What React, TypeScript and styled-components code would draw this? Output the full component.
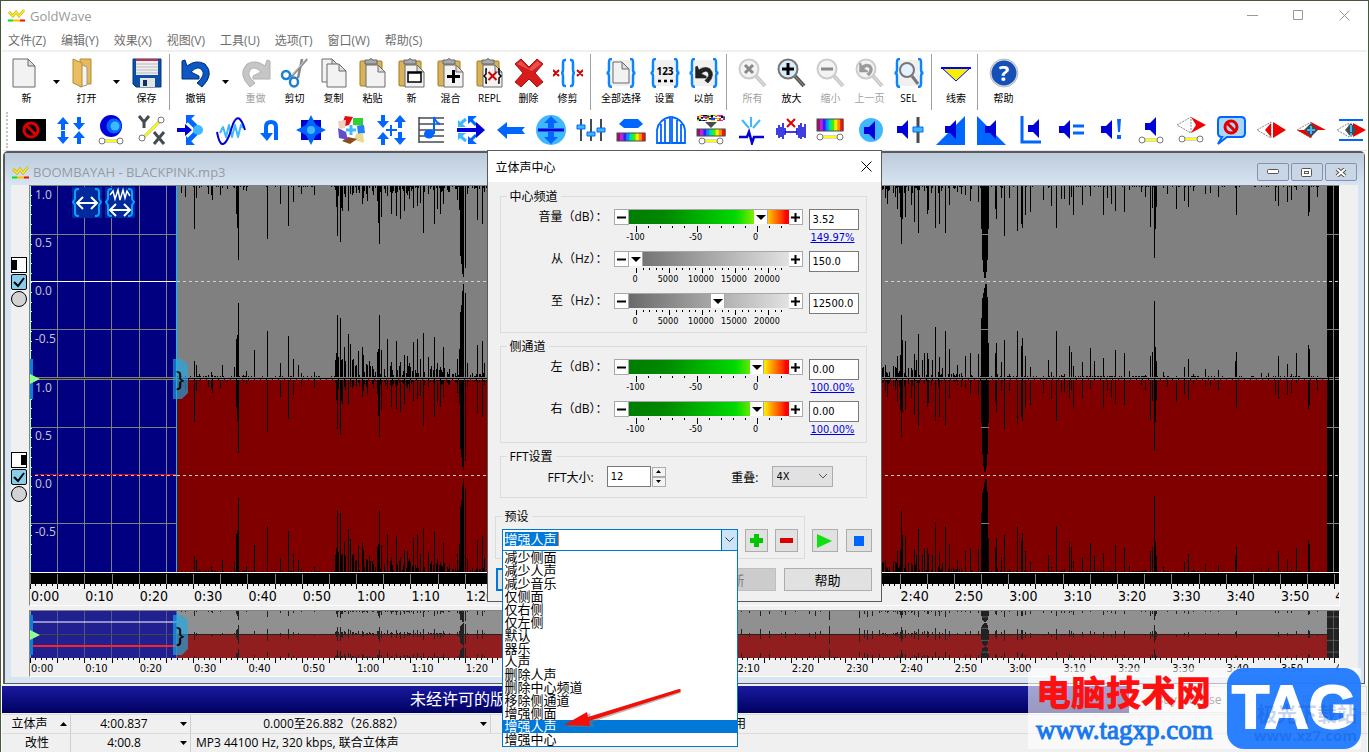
import React, { ReactNode } from 'react';
import styled, { createGlobalStyle, css } from 'styled-components';

const UI = '"Open Sans", "Noto Sans CJK SC", sans-serif';
const TAHOMA = '"DejaVu Sans Condensed", "Noto Sans", "Noto Sans CJK SC", sans-serif';

const GlobalStyle = createGlobalStyle`
  * { box-sizing: border-box; }
  body { margin: 0; background: #41563a; font-family: ${UI}; font-size: 12px; color: #000; overflow: hidden; }
  button, input, select { font: inherit; color: inherit; margin: 0; padding: 0; }
  button { cursor: default; }
  ul { list-style: none; margin: 0; padding: 0; }
  svg { display: block; flex: none; }
`;

const svgUrl = (body: string, w: number, h: number) =>
  `url("data:image/svg+xml,${encodeURIComponent(`<svg xmlns='http://www.w3.org/2000/svg' width='${w}' height='${h}'>${body}</svg>`)}")`;

/* ---------- application shell ---------- */

const AppWindow = styled.div`
  position: relative;
  display: flex;
  flex-direction: column;
  min-height: 100vh;
  padding: 1px 1px 0;
  background: #fff;
  border: 1px solid #46583c;
`;
const TitleBar = styled.header`
  display: flex;
  align-items: center;
  height: 29px;
  padding: 0 0 2px 6px;
  gap: 5px;
  color: #999;
  font-size: 13px;
`;
const CaptionButtons = styled.div`
  margin-left: auto;
  display: flex;
`;
const CaptionButton = styled.button`
  width: 46px;
  height: 28px;
  border: 0;
  background: none;
  display: grid;
  place-items: center;
  color: #999;
`;
const MenuBar = styled.nav`
  display: flex;
  align-items: center;
  gap: 15px;
  height: 21px;
  padding-left: 6px;
  border-bottom: 2px solid #f0f0f0;
`;
const MenuItem = styled.a`
  color: #6d6d6d;
  font-size: 12px;
  line-height: 18px;
  text-decoration: none;
  white-space: nowrap;
`;
const Toolbar = styled.div`
  display: flex;
  height: 60px;
  padding: 6px 0 0 5px;
`;
const ToolButton = styled.button<{ $w?: number; $off?: boolean }>`
  width: ${(p) => p.$w ?? 39}px;
  height: 48px;
  flex: none;
  border: 0;
  background: none;
  display: flex;
  flex-direction: column;
  align-items: center;
  gap: 2px;
  font-size: 10px;
  line-height: 16px;
  white-space: nowrap;
  color: ${(p) => (p.$off ? '#a0a0a0' : '#000')};
`;
const DropArrow = styled.button`
  width: 21px;
  height: 48px;
  flex: none;
  border: 0;
  background: none;
  display: grid;
  place-items: center;
`;
const Separator = styled.i`
  flex: none;
  width: 1px;
  height: 56px;
  margin: -4px 6px 0 3px;
  background: #a0a0a0;
`;
const EffectBar = styled.div`
  display: flex;
  align-items: center;
  height: 39px;
  padding: 0 0 3px 4px;
  border-bottom: 1px solid #e3e3e3;
  overflow: hidden;
`;
const Grip = styled.i`
  flex: none;
  width: 5px;
  height: 36px;
  border-left: 2px dotted #c4c4c4;
`;
const EffectButton = styled.button`
  width: 40px;
  height: 32px;
  flex: none;
  border: 0;
  background: none;
  display: grid;
  place-items: center;
`;

/* ---------- document window ---------- */

const Doc = styled.section`
  flex: 1;
  display: flex;
  flex-direction: column;
  margin: 0 2px 0 1px;
  border: solid #5a5a5e;
  border-width: 2px 1px 1px 2px;
  border-radius: 5px 5px 0 0;
  background: #d7e4f2;
  padding: 0 6px 6px 6px;
`;
const DocTitle = styled.div`
  display: flex;
  align-items: center;
  gap: 4px;
  height: 32px;
  margin: 0 -6px;
  padding: 6px 7px 0 7px;
  background: linear-gradient(#bccbda, #d7e4f2);
  color: #959ba3;
  font-size: 13px;
`;
const DocButtons = styled.div`
  margin-left: auto;
  display: flex;
  gap: 2px;
`;
const DocButton = styled.button`
  width: 32px;
  height: 18px;
  border: 1px solid #8790b0;
  border-radius: 2px;
  background: #c9d6e5;
  display: grid;
  place-items: center;
`;
const DocBody = styled.div`
  flex: 1;
  display: flex;
  background: #f0f0f0;
`;
const ChannelRail = styled.div`
  width: 18px;
  padding-top: 72px;
`;
const ChannelTools = styled.div`
  height: 195px;
  display: flex;
  flex-direction: column;
  gap: 1px;
`;
const ChannelSide = styled.button<{ $right?: boolean }>`
  width: 16px;
  height: 16px;
  border: 1px solid #000;
  background: ${(p) =>
    svgUrl(`<rect x='${p.$right ? 9 : 0}' y='2' width='5' height='10'/>`, 14, 14)} #fff;
`;
const ChannelCheck = styled.input`
  appearance: none;
  width: 16px;
  height: 16px;
  border: 1px solid #000;
  border-radius: 2px;
  background: ${svgUrl("<path d='M2 7l4 4 6-8' fill='none' stroke='#000' stroke-width='2'/>", 14, 14)} #87ceeb;
`;
const ChannelRadio = styled.input`
  appearance: none;
  width: 16px;
  height: 16px;
  border: 1px solid #000;
  border-radius: 50%;
  background: #d3d3d3;
`;
const DocMain = styled.div`
  flex: 1;
  min-width: 0;
  display: flex;
  flex-direction: column;
  gap: 4px;
  margin-right: 18px;
`;
const Sunken = styled.div`
  border: 1px solid #828282;
  border-right-color: #fff;
  border-bottom-color: #fff;
  overflow: hidden;
`;
const WaveBox = styled.div<{ $h: number }>`
  position: relative;
  height: ${(p) => p.$h}px;
  background: #808080;
  & > svg:first-child { width: 100%; height: 100%; }
`;
const AxisLabels = styled.div<{ $top: number }>`
  position: absolute;
  left: 5px;
  top: ${(p) => p.$top}px;
  color: #c8c8c8;
  font: 12px/16px ${UI};
  display: grid;
  grid-auto-rows: 48px;
`;
const SelectionTools = styled.div`
  position: absolute;
  left: 42px;
  top: 1px;
  display: flex;
  gap: 3px;
`;
const SelectionTool = styled.button`
  border: 0;
  padding: 0;
  background: #002a9c;
  width: 30px;
  height: 31px;
`;
const EndHandle = styled.span<{ $top: number }>`
  position: absolute;
  left: calc(11.15% - 3px);
  top: ${(p) => p.$top}px;
  width: 15px;
  height: 40px;
  clip-path: polygon(0 0, 9px 0, 100% 6px, 100% 34px, 9px 100%, 0 100%);
  background: rgba(30, 170, 230, 0.65);
  font: 22px/38px "Noto Sans", sans-serif;
  padding-left: 3px;
`;
const StartHandle = styled.span<{ $top: number }>`
  position: absolute;
  left: 0;
  top: ${(p) => p.$top}px;
  width: 3px;
  height: 40px;
  background: #0a80d8;
`;
const PlayMark = styled.span<{ $top: number }>`
  position: absolute;
  left: 0;
  top: ${(p) => p.$top}px;
  border: solid transparent;
  border-width: 5px 0 5px 10px;
  border-left-color: #90ff90;
`;
const RulerTicks = styled.svg`
  width: 100%;
`;
const RulerLabels = styled.div<{ $big?: boolean }>`
  display: flex;
  height: ${(p) => (p.$big ? 16 : 13)}px;
  font: ${(p) => (p.$big ? '14px/15px' : '11px/12px')} ${TAHOMA};
  & > span { flex: 0 0 4.152%; padding-left: 1px; white-space: nowrap; }
`;

/* ---------- footer ---------- */

const Footer = styled.footer`
  background: #f0f0f0;
  padding-top: 2px;
`;
const Banner = styled.div`
  display: flex;
  height: 27px;
  margin-bottom: 1px;
`;
const BannerText = styled.strong`
  flex: 1;
  padding-left: 408px;
  background: linear-gradient(#1a1aa0, #000060);
  color: #fff;
  font-weight: 400;
  font-size: 16px;
  line-height: 26px;
`;
const BannerButton = styled.button`
  width: 119px;
  border: 1px solid #ddd;
  background: #f5f5f5;
  font-size: 12px;
  color: #333;
`;
const StatusGrid = styled.div`
  display: grid;
  grid-template-columns: 69px 120px 300px 256px 1fr;
  grid-auto-rows: 19px;
`;
const StatusCell = styled.div<{ $align?: string; $span?: number }>`
  display: flex;
  align-items: center;
  justify-content: ${(p) => p.$align ?? 'center'};
  padding: 0 3px 0 5px;
  gap: 8px;
  border-top: 1px solid #dcdcdc;
  border-right: 1px solid #d0d0d0;
  line-height: 18px;
  white-space: nowrap;
  ${(p) => p.$span && css`grid-column: span ${p.$span}; border-right: 0;`}
  & > span { flex: 1; text-align: center; }
`;
const StatusNote = styled.p`
  flex: 1;
  margin: 0;
  padding-left: 190px;
`;

/* ---------- dialog ---------- */

const Dialog = styled.section`
  position: absolute;
  left: 50%;
  top: 149px;
  width: 395px;
  margin-left: -198px;
  height: 452px;
  border: 1px solid #5a5a5a;
  background: #f0f0f0;
  font-size: 12px;
`;
const DialogTitle = styled.header`
  display: flex;
  align-items: center;
  justify-content: space-between;
  height: 31px;
  padding: 0 2px 0 8px;
  background: #fff;
`;
const CloseButton = styled.button`
  width: 24px;
  height: 24px;
  border: 0;
  background: none;
  display: grid;
  place-items: center;
`;
const Group = styled.fieldset<{ $h: number; $gap: number }>`
  position: relative;
  height: ${(p) => p.$h}px;
  margin: ${(p) => p.$gap}px 14px 0 12px;
  padding: 0;
  border: 1px solid #dcdcdc;
`;
const Legend = styled.legend`
  position: absolute;
  top: -9px;
  left: 6px;
  padding: 0 3px;
  line-height: 18px;
  background: #f0f0f0;
`;
const SliderRow = styled.div`
  display: grid;
  grid-template-columns: 107px 189px 50px;
  column-gap: 6px;
  height: 42px;
  align-items: start;
`;
const SliderRows = styled.div`
  padding-top: 12px;
`;
const RowLabel = styled.label`
  text-align: right;
  line-height: 16px;
  white-space: nowrap;
`;
const SliderTrack = styled.div`
  display: flex;
  height: 16px;
  border: solid #a8a8a8;
  border-width: 1px 0 0 1px;
`;
const StepButton = styled.button`
  width: 14px;
  height: 15px;
  flex: none;
  border: 0;
  border-right: 1px solid #aaa;
  border-bottom: 1px solid #aaa;
  background: #fff;
  display: grid;
  place-items: center;
`;
const thumb = svgUrl("<path d='M2 5h10l-5 5z'/>", 14, 15);
const Range = styled.input<{ $db?: boolean }>`
  appearance: none;
  flex: 1;
  min-width: 0;
  height: 14px;
  background: ${(p) =>
    p.$db
      ? 'linear-gradient(90deg,#007d00 0%,#008800 22%,#00d800 66%,#20e000 70%,#98f000 80%,#f4f400 84%,#ffd800 86%,#ff9000 90%,#ff3000 96%,#f00 98%)'
      : 'linear-gradient(90deg,#6a6a6a,#e2e2e2)'};
  &::-webkit-slider-thumb {
    appearance: none;
    width: 14px;
    height: 14px;
    background: ${thumb} #fff;
    border-right: 1px solid #aaa;
  }
`;
const ScaleLabels = styled.div<{ $cell: number; $start: number }>`
  display: flex;
  margin-left: ${(p) => p.$start}px;
  font: 9px/10px ${TAHOMA};
  & > span { flex: 0 0 ${(p) => p.$cell}px; text-align: center; }
`;
const ValueColumn = styled.div`
  display: flex;
  flex-direction: column;
  align-items: flex-end;
`;
const boxed = css`
  height: 21px;
  border: 1px solid #7a7a7a;
  background: #fff;
  padding-left: 3px;
  font: 11px/16px ${TAHOMA};
`;
const ValueInput = styled.input`
  ${boxed}
  width: 50px;
`;
const PercentLink = styled.a`
  padding-right: 4px;
  color: #0000e6;
  font: 11px/16px ${TAHOMA};
`;
const FftRow = styled.div`
  display: flex;
  align-items: center;
  padding: 9px 33px 0 47px;
`;
const FftInput = styled.input`
  ${boxed}
  width: 44px;
  margin-left: 13px;
`;
const Spinner = styled.div`
  display: grid;
  margin: 0 auto 0 1px;
`;
const SpinButton = styled.button`
  width: 14px;
  height: 10px;
  border: 1px solid #acacac;
  background: #f4f4f4;
  display: grid;
  place-items: center;
`;
const OverlapSelect = styled.select`
  appearance: none;
  width: 61px;
  height: 21px;
  margin-left: 13px;
  padding-left: 4px;
  border: 1px solid #adadad;
  border-radius: 0;
  font: 11px/16px ${TAHOMA};
  background: ${svgUrl("<path d='M1 1l4 4 4-4' fill='none' stroke='#555'/>", 11, 7)} no-repeat right 3px center #e1e1e1;
`;
const PresetRow = styled.div`
  display: flex;
  align-items: flex-start;
`;
const PresetGroup = styled.fieldset`
  position: relative;
  width: 310px;
  height: 43px;
  margin: 18px 0 0 7px;
  padding: 12px 0 0 6px;
  border: 1px solid #dcdcdc;
  display: flex;
  gap: 7px;
`;
const Combo = styled.div`
  position: relative;
  display: flex;
  width: 236px;
  height: 22px;
  border: 1px solid #0078d7;
  background: #fff;
`;
const ComboInput = styled.input`
  width: 54px;
  height: 14px;
  margin: 2px auto 0 2px;
  border: 0;
  border-right: 1px solid #e08030;
  background: #0078d7;
  color: #fff;
  font-size: 13px;
  line-height: 14px;
`;
const ComboButton = styled.button`
  width: 16px;
  border: 0;
  border-left: 1px solid #0064b0;
  background: #cce4f7;
  display: grid;
  place-items: center;
`;
const Options = styled.ul`
  position: absolute;
  left: -1px;
  top: 20px;
  width: 236px;
  border: 1px solid #0078d7;
  background: #fff;
  z-index: 2;
`;
const Option = styled.li<{ $on?: boolean }>`
  height: 13px;
  padding-left: 2px;
  font-size: 13px;
  line-height: 12px;
  color: ${(p) => (p.$on ? '#fff' : '#000')};
  background: ${(p) => (p.$on ? '#0078d7' : 'none')};
`;
const Square = styled.button<{ $w: number }>`
  width: ${(p) => p.$w}px;
  height: 23px;
  flex: none;
  border: 1px solid #adadad;
  background: #e1e1e1;
  display: grid;
  place-items: center;
`;
const PlayButtons = styled.div`
  display: flex;
  gap: 8px;
  padding: 31px 0 0 7px;
`;
const DialogButtons = styled.div`
  display: flex;
  gap: 8px;
  padding: 9px 0 0 8px;
`;
const PushButton = styled.button<{ $primary?: boolean }>`
  width: 88px;
  height: 23px;
  border: ${(p) => (p.$primary ? '2px solid #0078d7' : '1px solid #adadad')};
  background: #e1e1e1;
  font-size: 13px;
  line-height: 18px;
  &:disabled { background: #ccc; color: #838383; border-color: #bfbfbf; }
`;
const PointerArrow = styled.svg`
  position: absolute;
  left: 75px;
  top: 535px;
  z-index: 3;
`;

/* ---------- watermark ---------- */

const Watermark = styled.aside`
  position: absolute;
  right: 7px;
  bottom: 3px;
  width: 333px;
  height: 81px;
  display: flex;
  justify-content: space-between;
  background: rgba(255, 255, 255, 0.6);
`;
const WatermarkText = styled.div`
  padding: 4px 0 0 8px;
  color: #ff1010;
  font: 900 35px/37px "Noto Sans CJK SC", sans-serif;
  white-space: nowrap;
`;
const WatermarkUrl = styled.div`
  margin-top: 5px;
  color: #1878f0;
  font: 400 27px/32px "Liberation Serif", serif;
  -webkit-text-stroke: 1px #1878f0;
`;
const TagBadge = styled.div`
  position: relative;
  width: 134px;
  height: 81px;
  border-radius: 17px;
  background: rgba(24, 117, 255, 0.92);
  color: #fff;
  font: 700 61px/78px "Liberation Sans", sans-serif;
  -webkit-text-stroke: 2px #fff;
  text-align: center;
`;
const SiteMark = styled.div`
  position: absolute;
  right: 4px;
  bottom: 4px;
  color: rgba(0, 60, 170, 0.22);
  font: 700 20px/20px ${UI};
  -webkit-text-stroke: 0;
  text-align: right;
  & > small { display: block; font-size: 15px; }
`;

/* ---------- icons ---------- */

const B = '#0066ff';
const D = '#0000d8';
const L = '#40b8ff';
const G = '#444c52';

const Icon = ({ children, size = 30 }: { children: ReactNode; size?: number }) => (
  <svg width={size} height={size} viewBox="0 0 30 30" fill="none" aria-hidden="true">{children}</svg>
);
const Logo = () => (
  <svg width="17" height="13" viewBox="0 0 17 13" fill="none">
    <path d="M1 3l4 4 3-4 3 4 5-6" stroke="#b89a00" strokeWidth="2.500" />
    <path d="M1 3l4 4 3-4 3 4 5-6" stroke="#ffee20" strokeWidth="1.500" />
    <path d="M0 11.500h5" stroke="#00e020" strokeWidth="2" />
    <path d="M5 11.500h7" stroke="#ffc000" strokeWidth="2" />
    <path d="M12 11.500h5" stroke="#f01000" strokeWidth="2" />
  </svg>
);
const Down = () => <svg width="7" height="4" viewBox="0 0 7 4"><path d="M0 0h7L3.500 4z" /></svg>;
const Up = () => <svg width="7" height="4" viewBox="0 0 7 4"><path d="M0 4h7L3.500 0z" /></svg>;

const Nodes = ({ y = 26, x1 = 6, x2 = 24 }: { y?: number; x1?: number; x2?: number }) => (
  <g>
    <path d={`M${x1} ${y}H${x2}`} stroke="#aaa" strokeWidth="3" />
    <path d={`M${x1} ${y}H${x2}`} stroke="#ffff00" strokeWidth="2" />
    <circle cx={x1} cy={y} r="3" fill="#fff" stroke="#777" />
    <circle cx={x2} cy={y} r="3" fill="#fff" stroke="#777" />
  </g>
);
const No = ({ x = 15, y = 15, r = 7 }: { x?: number; y?: number; r?: number }) => (
  <g stroke="#e00000" strokeWidth="3"><circle cx={x} cy={y} r={r} /><path d={`M${x - 5} ${y - 5}l10 10`} /></g>
);
const Speaker = ({ x = 0, y = 0 }: { x?: number; y?: number }) => (
  <path transform={`translate(${x} ${y})`} d="M0 6h5l6-6v19l-6-6H0z" fill={D} />
);
const Rainbow = ({ y, h = 8, w = 28 }: { y: number; h?: number; w?: number }) => (
  <g>
    {['#a01060', '#c020e0', '#3020ff', '#0090ff', '#00e0a0', '#40f000', '#f0f000', '#ff9000', '#ff1000'].map((c, i) => (
      <rect key={c} x={1 + (i * w) / 9} y={y} width={w / 9 + 0.5} height={h} fill={c} />
    ))}
    <rect x="1" y={y} width={w} height={h} stroke={G} />
  </g>
);
const Braces = () => (
  <>
    <rect x="5" y="2" width="20" height="26" fill="#f0f0f0" />
    <path
      d="M6 1H5Q3 1 3 4v8q0 3-2.500 3q2.500 0 2.500 3v8q0 3 3 3M24 1h1q2 0 2 3v8q0 3 2.500 3q-2.500 0-2.500 3v8q0 3-3 3"
      stroke="#0a84ff" strokeWidth="2.500"
    />
  </>
);
const Page = ({ x = 1, y = 1, w = 22, h = 28 }: { x?: number; y?: number; w?: number; h?: number }) => (
  <g>
    <path d={`M${x} ${y}h${w - 7}l7 7v${h - 7}h-${w}z`} fill="#f2f2f2" stroke="#6a6a6a" />
    <path d={`M${x + w - 7} ${y}v7h7z`} fill="#ddd" stroke="#6a6a6a" />
  </g>
);
const Clip = ({ children }: { children?: ReactNode }) => (
  <Icon>
    <rect x="2" y="3" width="22" height="25" rx="1" fill="#d9b35c" stroke="#a77918" />
    <path d="M7 2h4q2-3 4 0h4v4H7z" fill="#aaa" stroke="#666" />
    <Page x={8} y={7} w={19} h={22} />
    {children}
  </Icon>
);
const Lens = ({ off, children }: { off?: boolean; children?: ReactNode }) => (
  <Icon>
    <path d="M18 18l9 10" stroke={off ? '#c8c8c8' : '#555'} strokeWidth="4" />
    <path d="M18 18l9 10" stroke={off ? '#e6e6e6' : '#999'} strokeWidth="1" />
    <circle cx="11" cy="11" r="9.500" fill={off ? '#f3f3f3' : '#d8ecfc'} stroke={off ? '#ccc' : '#777'} strokeWidth="2" />
    {children}
  </Icon>
);
const Undo = ({ fill = '#0a58c4', stroke = '#052a74' }: { fill?: string; stroke?: string }) => (
  <path d="M1 3l3-1 2 6q9-7 18-2q10 10-3 23l-5-4q9-8 5-13q-4-5-11 2l8 4v3H1z" fill={fill} stroke={stroke} />
);
const Diamond = ({ y = 0, fill = '#f00000' }: { y?: number; fill?: string }) => (
  <g transform={`translate(0 ${y})`}>
    <path d="M1 15l14-8v16z" fill="#fff" stroke="#888" strokeDasharray="2 1" />
    <path d="M15 7l15 8-15 8 5-8z" fill={fill} />
  </g>
);
const x4 = (cx: number, cy: number, r: number) =>
  `M${cx - r} ${cy - r}L${cx + r} ${cy + r}M${cx + r} ${cy - r}L${cx - r} ${cy + r}`;

type Tool = { label: string; icon: ReactNode; w?: number; off?: boolean; drop?: boolean };
const toolGroups: Tool[][] = [
  [
    { label: '新', drop: true, icon: <Icon><Page /></Icon> },
    {
      label: '打开', drop: true,
      icon: <Icon>
        <path d="M8 1h11v25H8z" fill="#e6b95c" stroke="#b98a2c" />
        <path d="M8 6l7 3v18l-7 2z" fill="#f4f4f4" stroke="#999" />
        <path d="M1 1l9 4v24L1 25z" fill="#e9be62" stroke="#b98a2c" />
      </Icon>,
    },
    {
      label: '保存',
      icon: <Icon>
        <path d="M1 1h28v28H4l-3-3z" fill="#0c4ea8" stroke="#083878" />
        <path d="M4 1h22v16H4z" fill="#eee" /><path d="M4 1h22v2H4z" fill="#c03050" />
        <path d="M4 6h22M4 9h22M4 12h22M4 15h22" stroke="#bbb" />
        <path d="M8 20h15v9H8z" fill="#e4e4e4" /><path d="M11 22h4v6h-4z" fill="#103060" />
      </Icon>,
    },
  ],
  [
    { label: '撤销', drop: true, icon: <Icon><Undo /></Icon> },
    { label: '重做', off: true, icon: <Icon><g transform="translate(30 0) scale(-1 1)"><Undo fill="#c6c6c6" stroke="#b0b0b0" /></g></Icon> },
    {
      label: '剪切',
      icon: <Icon>
        <path d="M27 1L11 19M22 1l-4 19" stroke="#888" strokeWidth="2.500" /><path d="M26 1L12 17" stroke="#ddd" />
        <ellipse cx="6" cy="17" rx="4" ry="4" stroke="#1c7fd0" strokeWidth="2.500" />
        <ellipse cx="14" cy="24" rx="4" ry="4.500" stroke="#1c7fd0" strokeWidth="2.500" />
      </Icon>,
    },
    { label: '复制', icon: <Icon><Page x={3} y={1} w={17} h={23} /><Page x={8} y={6} w={19} h={23} /></Icon> },
    { label: '粘贴', icon: <Clip /> },
    { label: '新', icon: <Clip><path d="M11 14h13v10H11zM11 15h13" stroke="#000" strokeWidth="1.500" fill="#fff" /></Clip> },
    { label: '混合', icon: <Clip><path d="M17.500 12v13M11 18.500h13" stroke="#000" strokeWidth="3" /></Clip> },
    {
      label: 'REPL',
      icon: <Clip>
        <path d={x4(17.5, 18, 4)} stroke="#d00000" strokeWidth="2" />
        <path d="M12 11h-1v5l-2 2 2 2v5h1M23 11h1v5l2 2-2 2v5h-1" stroke="#000" strokeWidth="1.500" />
      </Clip>,
    },
    {
      label: '删除',
      icon: <Icon><path d="M1 6l6-5 8 8 8-8 6 5-8 9 8 9-6 5-8-8-8 8-6-5 8-9z" fill="#d81c1c" stroke="#a81010" /><path d="M3 6l4-3 8 8 8-8 4 3-9 7z" fill="#e85050" /></Icon>,
    },
    {
      label: '修剪',
      icon: <Icon>
        <path d="M13 2h-1q-2 0-2 3v7q0 3-2 3q2 0 2 3v7q0 3 2 3h1M17 2h1q2 0 2 3v7q0 3 2 3q-2 0-2 3v7q0 3-2 3h-1" stroke="#0a84ff" strokeWidth="2.500" />
        <path d={x4(3, 15, 3) + x4(27, 15, 3)} stroke="#d00000" strokeWidth="2" />
      </Icon>,
    },
  ],
  [
    { label: '全部选择', w: 48, icon: <Icon><Braces /><Page x={7} y={4} w={16} h={21} /></Icon> },
    {
      label: '设置',
      icon: <Icon><Braces /><text x="15" y="17" fontSize="10" fontWeight="700" textAnchor="middle" fill="#000" fontFamily="Open Sans">123</text><path d="M8 23h3m3 0h3m3 0h3" stroke="#000" strokeWidth="2.500" /></Icon>,
    },
    { label: '以前', icon: <Icon><Braces /><g transform="translate(6 7) scale(.62)"><Undo fill="#222" stroke="#222" /></g></Icon> },
  ],
  [
    { label: '所有', off: true, icon: <Lens off><path d={x4(11, 11, 4)} stroke="#888" strokeWidth="3" /></Lens> },
    { label: '放大', icon: <Lens><path d="M11 5v12M5 11h12" stroke="#000" strokeWidth="3" /></Lens> },
    { label: '缩小', off: true, icon: <Lens off><path d="M5 11h12" stroke="#888" strokeWidth="3" /></Lens> },
    { label: '上一页', off: true, icon: <Lens off><g transform="translate(4 4) scale(.48)"><Undo fill="#999" stroke="#999" /></g></Lens> },
    {
      label: 'SEL',
      icon: <Icon><Braces /><path d="M18 18l6 8" stroke="#777" strokeWidth="3" /><circle cx="13" cy="12" r="7" fill="#e2f2ff" stroke="#777" strokeWidth="2" /></Icon>,
    },
  ],
  [{ label: '线索', w: 36, icon: <Icon><path d="M1 10h28L15 23z" fill="#f4f000" /><path d="M1 10h28L15 23z" stroke="#0000ff" strokeWidth="1" /><path d="M0 10h30" stroke="#0000ff" strokeWidth="2" /></Icon> }],
  [
    {
      label: '帮助',
      icon: <Icon>
        <circle cx="15" cy="15" r="14" fill="#ddd" stroke="#bbb" /><circle cx="15" cy="15" r="12.500" fill="#1450b8" />
        <text x="15" y="23" fontSize="22" fontWeight="700" textAnchor="middle" fill="#fff" fontFamily="Open Sans">?</text>
      </Icon>,
    },
  ],
];

const up = (x: number, y: number, c = B) => <path d={`M${x} ${y}l6 7h-4v6h-4v-6h-4z`} fill={c} />;
const down = (x: number, y: number, c = B) => <path d={`M${x} ${y}l6-7h-4v-6h-4v6h-4z`} fill={c} />;
const noisy = Array.from({ length: 84 }, (_, i) => i);
const dots = ['#fff', '#000', '#e020e0', '#00c040', '#2040ff', '#f0e000', '#f02020'];

const effects: [string, ReactNode][] = [
  ['静音', <><rect y="4" width="30" height="22" fill="#000" /><No /></>],
  ['压缩', <>{up(7, 2)}{down(7, 29)}{down(23, 15)}{up(23, 16)}</>],
  ['多普勒', <><circle cx="15" cy="11" r="11" fill={D} /><circle cx="18" cy="11" r="7.500" fill={B} /><circle cx="19" cy="11" r="4.500" fill={L} /><Nodes /></>],
  ['表达式', <><path d="M3 1l5 6 5-6M8 7v6M18 17l10 12M28 17L18 29" stroke={G} strokeWidth="3" /><path d="M7 23L24 6" stroke="#aaa" strokeWidth="3" /><path d="M7 23L24 6" stroke="#ff0" strokeWidth="2" /><circle cx="6" cy="23" r="3" fill="#fff" stroke="#777" /><circle cx="25" cy="5" r="3" fill="#fff" stroke="#777" /></>],
  ['回声', <><path d="M12 4l8 8M12 26l8-8" stroke={B} strokeWidth="5" /><path d="M10 0h9l-9 9zM10 30h9l-9-9z" fill={B} /><path d="M1 13h8V9l7 6-7 6v-4H1z" fill={D} /><circle cx="22" cy="15" r="5" fill={L} /></>],
  ['镶边', <><path d="M4 18l3-6 3 10 3-12 3 12 3-12 3 12 3-12 2 3" stroke={L} strokeWidth="2" strokeLinejoin="round" /><path d="M1 17q4 22 12 4l4-12q6-14 12 6" stroke={D} strokeWidth="2" /></>],
  ['内插', <><path d="M10 19v-7q0-5 5-5t5 5v13" stroke={B} strokeWidth="4" /><path d="M4 18h13l-6 8z" fill={B} /></>],
  ['反转', <><path d="M5 5h20v20H5z" fill={D} /><path d="M15 0l5 10 10 5-10 5-5 10-5-10-10-5 10-5z" fill={B} /><circle cx="15" cy="15" r="4" fill={L} /></>],
  ['机械化', <><path d="M9 1l8 1-4 8-8 2z" fill="#e01010" /><path d="M17 3h10v8l-10-1z" fill="#30d030" /><path d="M21 11l7-1 1 8-7 1z" fill="#2080ff" /><path d="M20 19l7-1 1 10-10-3z" fill="#e8d890" /><path d="M12 22l9 2-7 5-8-3z" fill="#904818" /><path d="M2 13l8 4 2 8-9-2z" fill="#6050c8" /><path d="M2 6l8-1-1 8-6 1z" fill="#f0d0c0" /><path d="M15 10v10M10 15h10" stroke={L} strokeWidth="3" /></>],
  ['混响', <>{down(7, 13)}{up(24, 0)}{up(7, 17)}{down(24, 30)}<path d="M15 10v11M10 15h11" stroke={B} strokeWidth="2" /></>],
  ['音高', <><path d="M3 3h25M3 9h25M3 15h25M3 21h25M3 27h25M3 2v26" stroke={G} strokeWidth="1.500" /><ellipse cx="13" cy="19" rx="5" ry="4.500" fill={B} /><path d="M18 19V2q2 6 6 7" stroke={B} strokeWidth="2" /></>],
  ['反向', <><path d="M10 4l-7 6M10 26l-7-6" stroke={L} strokeWidth="3" /><path d="M2 5v7h8zM2 25v-7h8z" fill={L} /><path d="M13 3l7 7M13 27l7-7" stroke={B} strokeWidth="3" /><path d="M12 1h9l-9 8zM12 29h9l-9-8z" fill={B} /><path d="M1 13h19V7l9 8-9 8v-6H1z" fill={D} /></>],
  ['倒放', <path d="M1 15l10-8v5h18l-3 3 3 4H11v5z" fill={B} />],
  ['动态', <><circle cx="15" cy="15" r="15" fill={L} /><path d="M2 15h26" stroke={D} strokeWidth="3" /><path d="M15 1l7 7h-4v5h-6V8H8zM15 29l7-7h-4v-5h-6v5H8z" fill={B} /></>],
  ['均衡器', <><path d="M5 4v22M15 4v22M25 4v22" stroke={G} strokeWidth="2" /><path d="M1 10h8v4H1zM11 17h8v4h-8zM21 13h8v4h-8z" fill={L} stroke={B} /></>],
  ['滤波器', <><path d="M8 4h14l5 5-5 4H8L3 9z" fill={B} /><Rainbow y={18} /></>],
  ['噪声门', <path d="M1 28V15Q3 4 14 2v26zM29 28V15Q27 4 16 2v26zM5 28V9M9 28V5M25 28V9M21 28V5" stroke={B} strokeWidth="1.800" />],
  ['降噪', <>{noisy.map((i) => <rect key={i} x={1 + (i % 14) * 2} y={Math.floor(i / 14)} width="2" height="1" fill={dots[Math.floor(Math.abs(Math.sin(i * 12.9) * 700)) % 7]} />)}<path d="M9 7h12l-6 6z" fill={G} /><Rainbow y={14} h={7} /><Nodes y={26} /></>],
  ['爆音', <><path d="M15 2v10M6 5l7 8M24 5l-7 8" stroke={L} strokeWidth="2" /><path d="M3 22h8l2-5 3 11 2-6h10" stroke={D} strokeWidth="2.500" /></>],
  ['静音缩减', <><path d="M1 13v7M3 10v13M5 12v10M7 8v16M9 13v7M21 13v7M23 10v13M25 8v16M27 12v10M29 9v14M9 17h12" stroke={D} strokeWidth="1.500" /><path d={x4(15, 8, 4)} stroke="#e00000" strokeWidth="2" /></>],
  ['频谱', <><Rainbow y={4} h={12} w={26} /><Nodes y={22} x1={4} x2={24} /></>],
  ['音量', <><circle cx="15" cy="15" r="12" fill={L} /><Speaker x={8} y={6} /></>],
  ['调节音量', <><Speaker x={1} y={5} /><path d="M22 2v26" stroke={G} strokeWidth="3" /><path d="M17 12h10v5H17z" fill={L} stroke={B} /></>],
  ['淡入', <><path d="M0 30L29 1v29z" fill={B} /><Speaker x={9} y={5} /></>],
  ['淡出', <><path d="M1 30V1l29 29z" fill={B} /><Speaker x={9} y={5} /></>],
  ['最大化', <><path d="M6 1v26h19" stroke={B} strokeWidth="3" /><Speaker x={12} y={4} /></>],
  ['匹配', <><Speaker x={3} y={5} /><path d="M17 11h11M17 18h11" stroke={B} strokeWidth="3" /></>],
  ['峰值', <><Speaker x={5} y={5} /><path d="M21 4h4l-1 13h-2zM21 20h4v4h-4z" fill={B} /></>],
  ['塑形', <><Speaker x={9} y={2} /><Nodes y={25} /></>],
  ['声像', <><Diamond y={-5} /><Nodes y={24} /></>],
  ['审查', <><path d="M5 2h20q4 0 4 4v12q0 4-4 4H11l-9 7 4-7q-4 0-4-4V6q0-4 3-4z" fill="#a9d7fa" stroke={B} strokeWidth="2" /><No y={12} r={6} /></>],
  ['交换声道', <><path d="M1 15l14-8v16z" stroke="#888" strokeDasharray="2 1" /><path d="M9 15l6-7v14zM17 7l13 8-13 8z" fill="#f00000" /></>],
  ['立体声中心', <><path d="M1 15l14-8v16z" stroke="#888" strokeDasharray="2 1" /><path d="M15 7l15 8H18zM1 15l14 8 3-8z" fill="#f00000" /><path d="M15 8l7 7-7 7-7-7z" fill={G} /><path d="M15 11v8M11 15h8" stroke={L} strokeWidth="2" /></>],
  ['声道混合', <><path d="M3 5h24M3 25h24" stroke={B} strokeWidth="2" /><path d="M1 15l12-7v14z" stroke="#888" strokeDasharray="2 1" /><path d="M17 8l13 7-13 7z" fill="#f00000" /><path d="M15 8l6 7-6 7-6-7z" fill={G} /><path d="M15 10v7M15 18v3" stroke={L} strokeWidth="2" /></>],
];

/* ---------- waveform ---------- */

// Each gap is [x, depth from the upper edge, depth from the lower edge].
const gaps: [number, number, number][] = [
  [151, 7, 1], [155, 11, 1], [164, 43, 16], [166, 12, 12], [169, 2, 3], [178, 8, 2], [181, 9, 5], [182, 14, 2],
  [190, 9, 0], [192, 2, 12], [197, 3, 0], [204, 2, 10], [206, 28, 38], [207, 42, 42], [208, 74, 74], [213, 4, 2],
  [216, 5, 6], [224, 0, 27], [237, 53, 46], [250, 18, 14], [258, 40, 41], [263, 16, 18], [268, 1, 12], [271, 8, 4],
  [284, 9, 5], [306, 21, 24], [307, 50, 62], [308, 6, 20], [310, 56, 59], [311, 22, 17], [312, 25, 18], [314, 8, 30],
  [318, 25, 43], [320, 8, 33], [323, 7, 18], [328, 3, 26], [332, 18, 30], [333, 12, 22], [337, 15, 12], [343, 7, 8], [347, 15, 25],
  [348, 37, 28], [349, 58, 62], [351, 31, 27], [357, 10, 38], [361, 28, 15], [366, 30, 36], [370, 33, 15],
  [374, 25, 22], [377, 9, 21], [379, 13, 14], [383, 22, 35], [387, 20, 38], [390, 17, 18], [393, 47, 44], [398, 8, 20], [404, 38, 40],
  [407, 23, 14], [410, 28, 10], [413, 18, 30], [418, 5, 2], [427, 14, 18], [429, 24, 28], [430, 70, 65], [431, 78, 72],
  [432, 88, 86], [433, 91, 93], [435, 82, 84], [437, 8, 14], [447, 34, 32], [452, 38, 36], [454, 6, 14],
  [711, 8, 40], [719, 20, 12], [730, 40, 40], [739, 25, 30], [751, 8, 10], [755, 30, 16], [765, 6, 12], [779, 22, 14],
  [785, 40, 18], [790, 8, 24], [799, 76, 70], [829, 60, 50], [834, 26, 38], [837, 48, 34], [842, 38, 24], [849, 16, 32],
  [855, 12, 12], [857, 18, 3], [863, 7, 11], [865, 11, 4], [867, 23, 21], [870, 31, 22], [871, 58, 62], [872, 33, 37],
  [875, 31, 36], [881, 19, 8], [884, 36, 23], [886, 2, 17], [888, 47, 43], [892, 1, 17], [894, 4, 24], [897, 28, 24],
  [898, 24, 18], [902, 2, 17], [905, 42, 50], [909, 38, 20], [912, 2, 9], [915, 47, 46], [919, 19, 28], [927, 6, 12],
  [931, 8, 4], [935, 9, 21], [940, 15, 24], [948, 16, 23], [965, 23, 24], [966, 33, 34], [971, 12, 15], [974, 50, 37], [979, 12, 3],
  [987, 45, 46], [991, 38, 31], [992, 42, 39], [995, 29, 21], [1000, 26, 10], [1013, 14, 1], [1018, 2, 17], [1021, 20, 5],
  [1026, 42, 46], [1031, 13, 2], [1034, 13, 3], [1039, 19, 31], [1041, 11, 25], [1043, 29, 11], [1052, 19, 15],
  [1060, 10, 29], [1064, 1, 16], [1073, 29, 19], [1077, 12, 0], [1081, 18, 1], [1085, 25, 27], [1094, 26, 24],
  [1099, 4, 6], [1111, 6, 1], [1115, 11, 2], [1120, 41, 21], [1122, 22, 25], [1124, 72, 76], [1125, 43, 30],
  [1126, 21, 16], [1133, 2, 5], [1137, 8, 1], [1146, 23, 1], [1154, 15, 10], [1158, 21, 18], [1163, 5, 3],
  [1175, 8, 8], [1180, 7, 0], [1188, 11, 7], [1205, 2, 16], [1206, 29, 25], [1231, 0, 4], [1238, 0, 4], [1245, 15, 1],
  [1248, 20, 21], [1257, 16, 13], [1261, 14, 3], [1266, 4, 24], [1278, 30, 32], [1279, 26, 28], [1287, 11, 1],
];
const rand = (n: number) => {
  const v = Math.sin(n * 127.1) * 43758.5453;
  return v - Math.floor(v);
};
const dense: [number, number, number][] = [
  [305, 345, 18], [345, 420, 11], [420, 460, 4], [700, 850, 6], [850, 915, 10], [915, 975, 4], [975, 1290, 1], [147, 305, 1],
];
const fine: [number, number, number][] = dense.flatMap(([from, to, depth]) =>
  Array.from({ length: to - from }, (_, i) => {
    const x = from + i;
    const skip = rand(x) < 0.5;
    return [x, skip ? 0 : Math.round(rand(x + 7) * depth * 0.7), skip ? 0 : Math.round(rand(x + 3) * depth)] as [number, number, number];
  }),
);
const channelPath = (top: number, bottom: number) =>
  [...gaps, ...fine].map(([x, a, b]) => `M${x} ${top}h1v${a}h-1zM${x} ${bottom}h1v${-b}h-1z`).join('');
const bigGap = (t: number, b: number) =>
  `M951 ${t}h8v43h-1v31h-1v12h-1v6h-2v-6h-1v-12h-1v-31h-1zM951 ${b}h8v-34h-1v-46h-1v-13h-2v4h-1v5h-1v5h-1v20h-1z`;
const seconds = Array.from({ length: 241 }, (_, i) => i * 5.435);

const Wave = ({ small }: { small?: boolean }) => (
  <svg viewBox="0 0 1309 386" preserveAspectRatio="none" shapeRendering="crispEdges">
    <rect width="1309" height="193" fill={small ? '#909090' : '#808080'} />
    <rect y="193" width="1309" height="193" fill={small ? '#901e1e' : '#800000'} />
    <g fill={small ? '#222' : '#000'}>
      <path d={channelPath(0, 191)} />
      <path d={channelPath(193, 386)} />
      <path d={bigGap(0, 191) + bigGap(194, 386)} />
      <rect x="1297" width="12" height="386" />
      <rect y="192" width="1309" height={small ? 8 : 1} />
    </g>
    {!small && <path d="M147 191.500h1162M147 193.500h1162" stroke="#808080" strokeDasharray="5 1" />}
    <path d="M1303.500 0v386M951 48.500h8M951 143.500h8M951 241.500h8M951 337.500h8M1297 48.500h12M1297 143.500h12M1297 241.500h12M1297 337.500h12" stroke="#808080" />
    <rect width="147" height="386" fill={small ? '#202090' : '#000080'} />
    <path d="M27.500 0v386M54.500 0v386M81.500 0v386M109.500 0v386M136.500 0v386" stroke="#808080" />
    {small ? (
      <>
        <path d="M0 90h147" stroke="#fff" strokeWidth="8" />
        <path d="M0 290h147" stroke="#ff2020" strokeWidth="14" />
        <path d="M0 193h147" stroke="#444" strokeWidth="8" />
      </>
    ) : (
      <>
        <path d="M0 48.500h147M0 143.500h147M0 241.500h147M0 337.500h147M0 191.500h147M0 193.500h147" stroke="#808080" />
        <path d="M0 192.500h147" stroke="#202020" />
        <path d="M0 95.500h147" stroke="#fff" />
        <path d="M147 95.500h1162M147 289.500h1162" stroke="#d0d0d0" strokeDasharray="3 3" />
        <path d="M5 289.500h142" stroke="#c8c8c8" strokeDasharray="3 3" />
        <path d="M5 288.500h76" stroke="#ff0000" strokeDasharray="4 1" />
        <path d="M81 288.500h66" stroke="#ff0000" />
        <path d={Array.from({ length: 38 }, (_, i) => `M1 ${Math.round(i * 9.7) + 9.5}h1`).join('')} stroke="#c0ffc0" />
      </>
    )}
    <path d="M.5 0v386" stroke="#b0ffb0" />
    <path d="M146.500 0v386" stroke="#00c0ff" />
  </svg>
);

const Ruler = ({ big }: { big?: boolean }) => {
  const band = big ? 12 : 0;
  return (
    <>
      <RulerTicks viewBox={`0 0 1309 ${band + 5}`} height={band + 5} preserveAspectRatio="none" shapeRendering="crispEdges">
        {big && <><rect width="1309" height="12" fill="#000" /><path d="M0 .5h1309" stroke="#fff" /></>}
        {big && <path d={seconds.filter((_, i) => i % 5 === 0).map((x) => `M${Math.round(x) + 0.5} 2v10`).join('')} stroke="#808080" />}
        <path d={seconds.map((x, i) => `M${Math.round(x) + 0.5} ${band}v${i % 5 === 0 ? 5 : 2}`).join('')} stroke="#000" />
      </RulerTicks>
      <RulerLabels $big={big}>
        {Array.from({ length: 25 }, (_, i) => (
          <span key={i}>{`${Math.floor(i / 6)}:${(i % 6) * 10 || '00'}`}</span>
        ))}
      </RulerLabels>
    </>
  );
};

/* ---------- dialog pieces ---------- */

type SliderProps = { id: string; label: string; db?: boolean; value: number; text: string; percent?: string };
const dbTicks = Array.from({ length: 13 }, (_, i) => `M${Math.round(22 + i * 12.1) + 0.5} 1v${i === 0 || i === 5 || i === 10 ? 6 : 2}`).join('');
const hzTicks = Array.from({ length: 23 }, (_, i) => `M${Math.round(22 + i * 6.6) + 0.5} 1v${i % 5 === 0 ? 5 : 2}`).join('');

const Slider = ({ id, label, db, value, text, percent }: SliderProps) => (
  <SliderRow>
    <RowLabel htmlFor={id}>{label}</RowLabel>
    <div>
      <SliderTrack>
        <StepButton aria-label="减少"><svg width="9" height="9"><path d="M0 4.500h9" stroke="#000" strokeWidth="2" /></svg></StepButton>
        <Range id={id} type="range" $db={db} min={db ? -100 : 0} max={db ? 20 : 22050} step="any" defaultValue={value} />
        <StepButton aria-label="增加"><svg width="9" height="9"><path d="M0 4.500h9M4.500 0v9" stroke="#000" strokeWidth="2" /></svg></StepButton>
      </SliderTrack>
      <svg width="189" height="7" shapeRendering="crispEdges"><path d={db ? dbTicks : hzTicks} stroke="#000" /></svg>
      <ScaleLabels $cell={db ? 60 : 33} $start={db ? -8 : 5}>
        {(db ? ['-100', '-50', '0'] : ['0', '5000', '10000', '15000', '20000']).map((t) => <span key={t}>{t}</span>)}
      </ScaleLabels>
    </div>
    <ValueColumn>
      <ValueInput aria-label={label} defaultValue={text} />
      {percent && <PercentLink href="#">{percent}</PercentLink>}
    </ValueColumn>
  </SliderRow>
);

const presets = ['减少侧面', '减少人声', '减少音乐', '仅侧面', '仅右侧', '仅左侧', '默认', '器乐', '人声', '删除人声', '删除中心频道', '移除侧通道', '增强侧面', '增强人声', '增强中心'];

const CenterDialog = () => (
  <Dialog role="dialog" aria-label="立体声中心">
    <DialogTitle>
      立体声中心
      <CloseButton aria-label="关闭"><svg width="11" height="11"><path d="M.5.5l10 10M10.500.5l-10 10" stroke="#000" /></svg></CloseButton>
    </DialogTitle>
    <Group $h={137} $gap={14}>
      <Legend>中心频道</Legend>
      <SliderRows>
        <Slider id="vol" label="音量（dB）：" db value={3.52} text="3.52" percent="149.97%" />
        <Slider id="from" label="从（Hz）：" value={150} text="150.0" />
        <Slider id="to" label="至（Hz）：" value={12500} text="12500.0" />
      </SliderRows>
    </Group>
    <Group $h={97} $gap={13}>
      <Legend>侧通道</Legend>
      <SliderRows>
        <Slider id="left" label="左（dB）：" db value={0} text="0.00" percent="100.00%" />
        <Slider id="right" label="右（dB）：" db value={0} text="0.00" percent="100.00%" />
      </SliderRows>
    </Group>
    <Group $h={42} $gap={13}>
      <Legend>FFT设置</Legend>
      <FftRow>
        <label htmlFor="fft">FFT大小:</label>
        <FftInput id="fft" defaultValue="12" />
        <Spinner>
          <SpinButton aria-label="增加"><svg width="5" height="3"><path d="M0 3h5L2.500 0z" /></svg></SpinButton>
          <SpinButton aria-label="减少"><svg width="5" height="3"><path d="M0 0h5L2.500 3z" /></svg></SpinButton>
        </Spinner>
        <label htmlFor="overlap">重叠:</label>
        <OverlapSelect id="overlap" defaultValue="4X"><option>4X</option></OverlapSelect>
      </FftRow>
    </Group>
    <PresetRow>
      <PresetGroup>
        <Legend>预设</Legend>
        <Combo>
          <ComboInput aria-label="预设" defaultValue="增强人声" />
          <ComboButton aria-label="打开列表"><svg width="9" height="6" fill="none"><path d="M.5.5l4 4 4-4" stroke="#333" /></svg></ComboButton>
          <Options role="listbox">
            {presets.map((p) => <Option key={p} role="option" $on={p === '增强人声'}>{p}</Option>)}
          </Options>
        </Combo>
        <Square $w={23} aria-label="添加"><svg width="13" height="13"><path d="M6.500 0v13M0 6.500h13" stroke="#00c800" strokeWidth="5" /></svg></Square>
        <Square $w={23} aria-label="删除"><svg width="13" height="5"><rect width="13" height="5" fill="#d80000" /></svg></Square>
      </PresetGroup>
      <PlayButtons>
        <Square $w={26} aria-label="播放"><svg width="15" height="14"><path d="M0 0l15 7-15 7z" fill="#10e010" /></svg></Square>
        <Square $w={26} aria-label="停止"><svg width="10" height="10"><rect width="10" height="10" fill="#0064ff" /></svg></Square>
      </PlayButtons>
    </PresetRow>
    <DialogButtons>
      <PushButton $primary>确定</PushButton>
      <PushButton>取消</PushButton>
      <PushButton disabled>更新</PushButton>
      <PushButton>帮助</PushButton>
    </DialogButtons>
    <PointerArrow width="124" height="46" viewBox="0 0 124 46">
      <path d="M4 41l23-14 1 5 89-28 1 3-89 29 2 5z" fill="#777" opacity=".5" />
      <path d="M1 39l23-13 1 5 91-28q3 0 1 3L26 35l1 5z" fill="#f01008" />
    </PointerArrow>
  </Dialog>
);

const bracketPath = 'M7 2H6Q3 2 3 5v7l-2 3 2 3v8q0 3 3 3h1M23 2h1q3 0 3 3v7l2 3-2 3v8q0 3-3 3h-1';

export default function App() {
  return (
    <AppWindow>
      <GlobalStyle />
      <TitleBar>
        <Logo />
        GoldWave
        <CaptionButtons>
          <CaptionButton aria-label="最小化"><svg width="11" height="11"><path d="M0 5.500h11" stroke="#999" /></svg></CaptionButton>
          <CaptionButton aria-label="最大化"><svg width="11" height="11"><path d="M.5.5h9v9h-9z" fill="none" stroke="#999" /></svg></CaptionButton>
          <CaptionButton aria-label="关闭"><svg width="11" height="11"><path d="M.5.5l10 10M10.500.5l-10 10" stroke="#999" /></svg></CaptionButton>
        </CaptionButtons>
      </TitleBar>
      <MenuBar>
        {['文件(Z)', '编辑(Y)', '效果(X)', '视图(V)', '工具(U)', '选项(T)', '窗口(W)', '帮助(S)'].map((m) => (
          <MenuItem key={m} href="#">{m}</MenuItem>
        ))}
      </MenuBar>
      <Toolbar>
        {toolGroups.map((group, g) => (
          <React.Fragment key={g}>
            {g > 0 && <Separator />}
            {group.map((t, i) => (
              <React.Fragment key={i}>
                <ToolButton $w={t.w} $off={t.off} disabled={t.off}>{t.icon}{t.label}</ToolButton>
                {t.drop && <DropArrow aria-label={`${t.label}选项`}><Down /></DropArrow>}
              </React.Fragment>
            ))}
          </React.Fragment>
        ))}
      </Toolbar>
      <EffectBar>
        <Grip />
        {effects.map(([name, art]) => (
          <EffectButton key={name} aria-label={name}><Icon>{art}</Icon></EffectButton>
        ))}
      </EffectBar>

      <Doc>
        <DocTitle>
          <Logo />
          BOOMBAYAH - BLACKPINK.mp3
          <DocButtons>
            <DocButton aria-label="最小化"><svg width="12" height="6"><rect x=".5" y=".5" width="11" height="4" rx="1" fill="#fff" stroke="#555" /></svg></DocButton>
            <DocButton aria-label="还原"><svg width="12" height="9"><rect x=".5" y=".5" width="10" height="8" rx="1" fill="#fff" stroke="#555" /><rect x="3.500" y="3.500" width="4" height="2" fill="#fff" stroke="#555" /></svg></DocButton>
            <DocButton aria-label="关闭"><svg width="12" height="9"><path d="M2 1l8 7M10 1L2 8" stroke="#555" strokeWidth="4" /><path d="M2 1l8 7M10 1L2 8" stroke="#fff" strokeWidth="2" /></svg></DocButton>
          </DocButtons>
        </DocTitle>
        <DocBody>
          <ChannelRail>
            {[false, true].map((right) => (
              <ChannelTools key={String(right)}>
                <ChannelSide $right={right} aria-label={right ? '右声道' : '左声道'} />
                <ChannelCheck type="checkbox" defaultChecked aria-label="启用声道" />
                <ChannelRadio type="radio" aria-label="独奏声道" />
              </ChannelTools>
            ))}
          </ChannelRail>
          <DocMain>
            <Sunken>
              <WaveBox $h={386}>
                <Wave />
                {[1, 194].map((top) => (
                  <AxisLabels key={top} $top={top}><span>1.0</span><span>0.5</span><span>0.0</span><span>-0.5</span></AxisLabels>
                ))}
                <SelectionTools>
                  <SelectionTool aria-label="显示选区">
                    <svg width="30" height="31" fill="none"><path d={bracketPath} stroke="#0aa0ff" strokeWidth="2" /><path d="M6 16h18M11 10l-6 6 6 6M19 10l6 6-6 6" stroke="#fff" strokeWidth="2" /></svg>
                  </SelectionTool>
                  <SelectionTool aria-label="缩放选区">
                    <svg width="30" height="31" fill="none"><path d={bracketPath} stroke="#0aa0ff" strokeWidth="2" /><path d="M5 8l3-4 2 8 3-9 2 10 3-10 2 8 2-7 3 5" stroke="#fff" strokeWidth="1.500" /><path d="M6 23h18M11 17l-6 6 6 6M19 17l6 6-6 6" stroke="#fff" strokeWidth="2" /></svg>
                  </SelectionTool>
                </SelectionTools>
                <StartHandle $top={173} />
                <EndHandle $top={173}>{'}'}</EndHandle>
                <PlayMark $top={188} />
              </WaveBox>
              <Ruler big />
            </Sunken>
            <Sunken>
              <WaveBox $h={47}>
                <Wave small />
                <StartHandle $top={4} />
                <EndHandle $top={4}>{'}'}</EndHandle>
                <PlayMark $top={19} />
              </WaveBox>
              <Ruler />
            </Sunken>
          </DocMain>
        </DocBody>
      </Doc>

      <Footer>
        <Banner>
          <BannerText>未经许可的版本</BannerText>
          <BannerButton>Buy License</BannerButton>
          <BannerButton>输入序列号</BannerButton>
        </Banner>
        <StatusGrid>
          <StatusCell><span>立体声</span><Up /></StatusCell>
          <StatusCell><span>4:00.837</span><Down /></StatusCell>
          <StatusCell><span>0.000至26.882（26.882）</span><Down /></StatusCell>
          <StatusCell $span={2}><StatusNote>剪贴板可用</StatusNote></StatusCell>
          <StatusCell><span>改性</span></StatusCell>
          <StatusCell><span>4:00.8</span><Down /></StatusCell>
          <StatusCell $align="flex-start" $span={3}>MP3 44100 Hz, 320 kbps, 联合立体声</StatusCell>
        </StatusGrid>
      </Footer>

      <CenterDialog />

      <Watermark>
        <WatermarkText>
          电脑技术网
          <WatermarkUrl>www.tagxp.com</WatermarkUrl>
        </WatermarkText>
        <TagBadge>
          <SiteMark>极光下载站<small>www.xz7.com</small></SiteMark>
          TAG
        </TagBadge>
      </Watermark>
    </AppWindow>
  );
}
